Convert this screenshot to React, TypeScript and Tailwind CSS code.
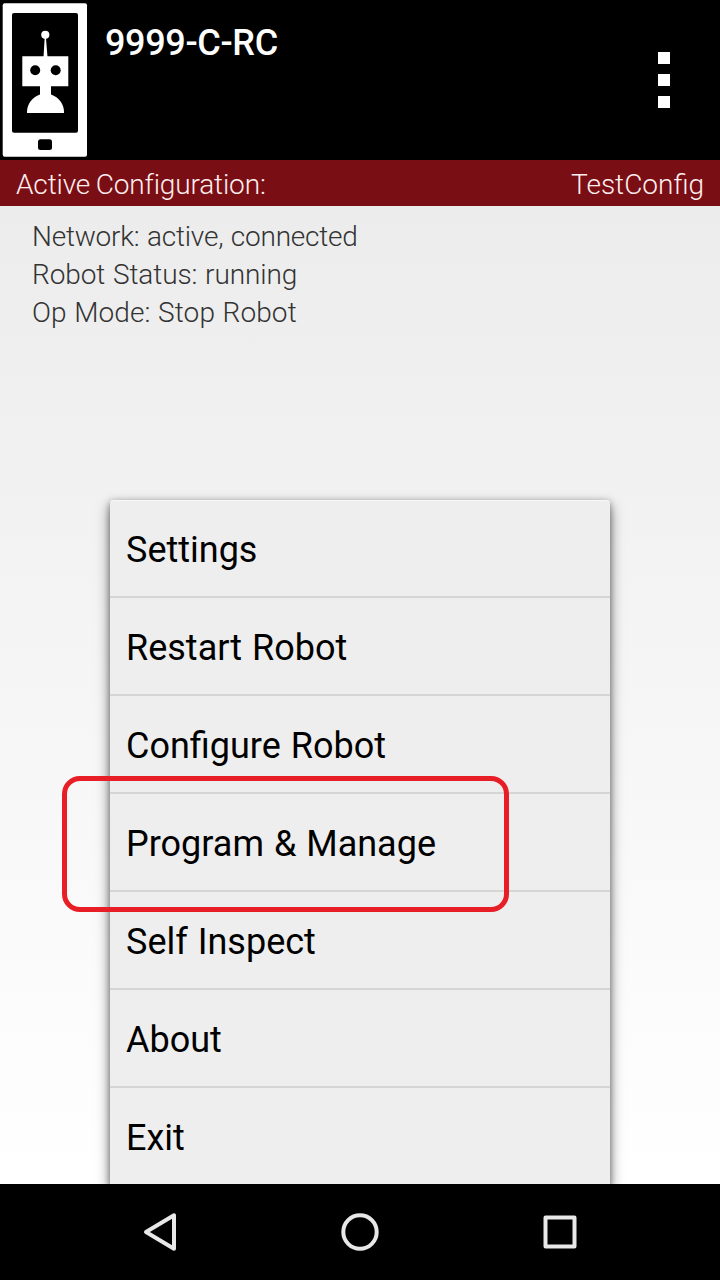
const menuItems = [
  'Settings',
  'Restart Robot',
  'Configure Robot',
  'Program & Manage',
  'Self Inspect',
  'About',
  'Exit',
];

function RobotPhoneIcon() {
  return (
    <svg viewBox="0 0 88 160" className="h-40 w-22 shrink-0">
      <rect x="2.7" y="3.3" width="84.3" height="153.4" rx="2" fill="#fff" />
      <rect x="12" y="13" width="66" height="119.8" rx="2" fill="#000" />
      <rect x="38" y="139.2" width="14" height="10.8" rx="2.5" fill="#000" />
      <g fill="#fff">
        <circle cx="45.3" cy="34.8" r="4.1" />
        <path d="M44.8 36h1l1.7 21h-4z" />
        <path d="M22.3 56.3H68.3V86.3H51V94.6A18.6 18.6 0 0 1 64 113H27A18.6 18.6 0 0 1 40 94.6V86.3H22.3z" />
      </g>
      <circle cx="35.2" cy="70.2" r="5" />
      <circle cx="55.7" cy="70.2" r="5" />
    </svg>
  );
}

function Header() {
  return (
    <header className="flex h-40 shrink-0 bg-black">
      <RobotPhoneIcon />
      <h1 className="mt-[22px] ml-[17px] grow text-[36px] leading-[42px] font-medium tracking-[-0.35px] text-white">
        9999-C-RC
      </h1>
      <button aria-label="Menu" className="mr-[50px] flex flex-col items-center justify-center gap-[10px]">
        <span className="size-3 bg-white" />
        <span className="size-3 bg-white" />
        <span className="size-3 bg-white" />
      </button>
    </header>
  );
}

function Menu() {
  return (
    <ul className="absolute top-[294px] left-[110px] w-[500px] rounded-t-[3px] border-t border-[#f8f8f8] bg-[#eeeeee] shadow-[0_6px_14px_rgba(0,0,0,0.5),0_2px_6px_rgba(0,0,0,0.35)]">
      {menuItems.map((item) => (
        <li
          key={item}
          className="flex h-[98px] items-center border-b-2 border-[#d5d5d5] px-4 pt-[4px] text-[36px] leading-[42px] font-normal [word-spacing:1px] text-black first:h-[97px] first:pt-[3px] last:border-b-0 last:pt-[2px]"
        >
          {item}
        </li>
      ))}
    </ul>
  );
}

function NavigationBar() {
  return (
    <nav className="flex h-24 shrink-0 items-center justify-center gap-[152px] bg-black">
      <svg viewBox="0 0 48 48" className="size-12" fill="none" stroke="#e8e8e8" strokeWidth="4" strokeLinejoin="round">
        <path d="M38 7.3V40.7L10 24z" />
      </svg>
      <svg viewBox="0 0 48 48" className="size-12" fill="none" stroke="#e8e8e8" strokeWidth="4">
        <circle cx="24" cy="24" r="16.7" />
      </svg>
      <svg viewBox="0 0 48 48" className="size-12" fill="none" stroke="#e8e8e8" strokeWidth="4" strokeLinejoin="round">
        <rect x="9.5" y="9.5" width="29" height="29" />
      </svg>
    </nav>
  );
}

export default function App() {
  return (
    <div className="flex h-[1280px] w-[720px] flex-col overflow-hidden font-['Roboto',sans-serif]">
      <Header />
      <div className="flex h-[46px] shrink-0 items-center justify-between bg-[#790e15] px-4 pt-[3px] text-[28px] leading-[33px] font-light text-[#ffeeee]">
        <span className="tracking-[-0.15px] [word-spacing:-1px]">Active Configuration:</span>
        <span>TestConfig</span>
      </div>
      <main className="relative grow overflow-hidden bg-linear-to-b from-[#ececec] to-white px-8 pt-[12px] text-[28px] leading-[38px] font-light text-[#333333]">
        <p className="tracking-[-0.23px] [word-spacing:1px]">Network: active, connected</p>
        <p className="tracking-[-0.1px] [word-spacing:1px]">Robot Status: running</p>
        <p className="tracking-[0.1px] [word-spacing:0.6px]">Op Mode: Stop Robot</p>
        <Menu />
        <div className="absolute top-[570px] left-[62px] h-[136px] w-[447px] rounded-[18px] border-5 border-[#e81e27]" />
      </main>
      <NavigationBar />
    </div>
  );
}
